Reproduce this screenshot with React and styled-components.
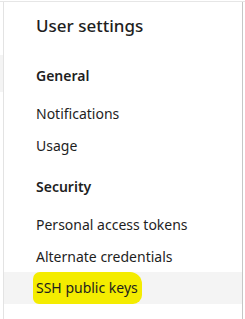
import React from 'react'
import styled, { createGlobalStyle } from 'styled-components'

const GlobalStyle = createGlobalStyle`
  html, body {
    margin: 0;
    padding: 0;
    background: #ffffff;
  }
  body {
    font-family: "Noto Sans", "Open Sans", sans-serif;
    color: #1e1e1e;
    -webkit-font-smoothing: antialiased;
  }
`

const sections = [
  { title: 'General', items: ['Notifications', 'Usage'] },
  { title: 'Security', items: ['Personal access tokens', 'Alternate credentials', 'SSH public keys'] },
]

const selected = 'SSH public keys'

function App() {
  return (
    <>
      <GlobalStyle />
      <Page>
        <Gutter>
          <GutterBlock />
        </Gutter>
        <Panel>
          <Title>User settings</Title>
          {sections.map((section) => (
            <Section key={section.title}>
              <SectionTitle>{section.title}</SectionTitle>
              {section.items.map((item) => (
                <NavItem key={item} $active={item === selected}>
                  {item === selected ? <Marker>{item}</Marker> : item}
                </NavItem>
              ))}
            </Section>
          ))}
        </Panel>
        <RightEdge />
      </Page>
    </>
  )
}

export default App

const Page = styled.div`
  display: flex;
  height: 318px;
  margin-top: 1px;
  border-top: 1px solid #e6e6e6;
  box-sizing: border-box;
`

const Gutter = styled.div`
  width: 3px;
  padding-top: 53px;
`

const GutterBlock = styled.div`
  height: 37px;
  background: #f4f4f4;
`

const Panel = styled.nav`
  flex: 1;
  display: flex;
  flex-direction: column;
  border-left: 1px solid #e3e3e3;
  border-right: 1px solid #c6c6c6;
  padding-top: 12px;
`

const RightEdge = styled.div`
  width: 2px;
`

const Title = styled.h1`
  margin: 0 0 12px 32px;
  font-size: 17px;
  font-weight: 500;
  line-height: 24px;
`

const Section = styled.section`
  display: flex;
  flex-direction: column;
  margin-top: 10px;
`

const SectionTitle = styled.h2`
  margin: 0 0 5px 32px;
  font-size: 14px;
  font-weight: 600;
  line-height: 32px;
`

const NavItem = styled.div`
  height: 32px;
  display: flex;
  align-items: center;
  padding-left: 32px;
  font-size: 14px;
  background: ${(p) => (p.$active ? '#f4f4f4' : 'transparent')};
`

const Marker = styled.span`
  background: #f4ec00;
  margin-left: -3px;
  padding: 6px 4px 7px 3px;
  border-radius: 7px 12px 9px 6px;
`
